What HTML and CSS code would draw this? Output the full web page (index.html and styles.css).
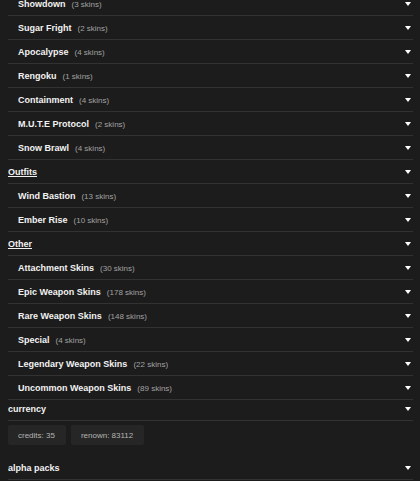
FILE: index.html
```html
<!DOCTYPE html>
<html lang="en">
<head>
    <meta charset="UTF-8">
    <meta name="viewport" content="width=device-width, initial-scale=1.0">
    <title>Inventory</title>
    <link rel="stylesheet" href="styles.css">
</head>
<body>
    <div class="inventory">
        <div class="row item"><span class="name">Showdown</span><span class="count">(3 skins)</span><i class="arrow"></i></div>
        <div class="row item"><span class="name">Sugar Fright</span><span class="count">(2 skins)</span><i class="arrow"></i></div>
        <div class="row item"><span class="name">Apocalypse</span><span class="count">(4 skins)</span><i class="arrow"></i></div>
        <div class="row item"><span class="name">Rengoku</span><span class="count">(1 skins)</span><i class="arrow"></i></div>
        <div class="row item"><span class="name">Containment</span><span class="count">(4 skins)</span><i class="arrow"></i></div>
        <div class="row item"><span class="name">M.U.T.E Protocol</span><span class="count">(2 skins)</span><i class="arrow"></i></div>
        <div class="row item"><span class="name">Snow Brawl</span><span class="count">(4 skins)</span><i class="arrow"></i></div>

        <div class="row category"><span class="name">Outfits</span><i class="arrow"></i></div>
        <div class="row item"><span class="name">Wind Bastion</span><span class="count">(13 skins)</span><i class="arrow"></i></div>
        <div class="row item"><span class="name">Ember Rise</span><span class="count">(10 skins)</span><i class="arrow"></i></div>

        <div class="row category"><span class="name">Other</span><i class="arrow"></i></div>
        <div class="row item"><span class="name">Attachment Skins</span><span class="count">(30 skins)</span><i class="arrow"></i></div>
        <div class="row item"><span class="name">Epic Weapon Skins</span><span class="count">(178 skins)</span><i class="arrow"></i></div>
        <div class="row item"><span class="name">Rare Weapon Skins</span><span class="count">(148 skins)</span><i class="arrow"></i></div>
        <div class="row item"><span class="name">Special</span><span class="count">(4 skins)</span><i class="arrow"></i></div>
        <div class="row item"><span class="name">Legendary Weapon Skins</span><span class="count">(22 skins)</span><i class="arrow"></i></div>
        <div class="row item"><span class="name">Uncommon Weapon Skins</span><span class="count">(89 skins)</span><i class="arrow"></i></div>

        <div class="row section currency"><span class="name">currency</span><i class="arrow"></i></div>
        <div class="chips">
            <span class="chip">credits: 35</span>
            <span class="chip">renown: 83112</span>
        </div>

        <div class="row section"><span class="name">alpha packs</span><i class="arrow"></i></div>
    </div>
</body>
</html>
```

FILE: styles.css
```css
:root {
    --bg-color: #1c1c1c;
    --line-color: #323232;
    --chip-color: #262626;
    --text-color: #f2f2f2;
    --muted-color: #a2a2a2;
}

* {
    box-sizing: border-box;
    margin: 0;
    padding: 0;
}

body {
    font-family: 'Liberation Sans', Arial, sans-serif;
    background-color: var(--bg-color);
    color: var(--text-color);
    margin: 0 7px 0 8px;
    overflow: hidden;
}

.inventory {
    margin-top: -8px;
}

.row {
    display: flex;
    align-items: center;
    height: 24px;
    padding: 1px 2px 0 0;
    border-bottom: 1px solid var(--line-color);
}

.row .name {
    font-size: 9px;
    font-weight: 700;
}

.item {
    padding-left: 10px;
}

.category .name {
    text-decoration: underline;
}

.section.currency {
    height: 21px;
    padding: 0 2px 2px 0;
}

.count {
    margin-left: 6px;
    font-size: 8px;
    color: var(--muted-color);
}

.arrow {
    margin-left: auto;
    width: 0;
    height: 0;
    border-left: 3px solid transparent;
    border-right: 3px solid transparent;
    border-top: 4px solid #ffffff;
}

.chips {
    display: flex;
    gap: 5px;
    padding: 4px 0 11px;
}

.chip {
    display: flex;
    align-items: center;
    height: 20px;
    padding: 0 11px 0 10px;
    background-color: var(--chip-color);
    border-radius: 2px;
    font-size: 8px;
    color: #b4b4b4;
}
```
